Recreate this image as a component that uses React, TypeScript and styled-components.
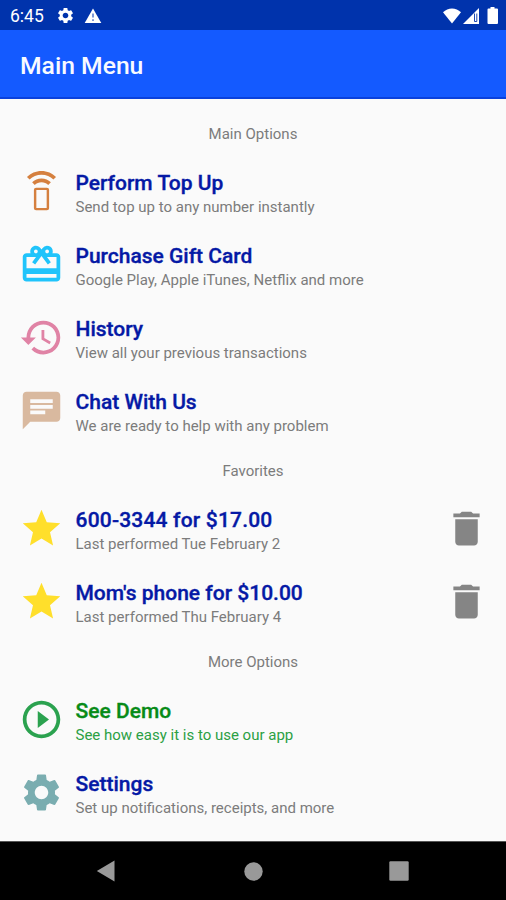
import React from "react";
import styled, { createGlobalStyle } from "styled-components";
import {
  MdRedeem,
  MdHistory,
  MdChat,
  MdStar,
  MdDelete,
  MdPlayCircleOutline,
  MdSettings,
} from "react-icons/md";

const GlobalStyle = createGlobalStyle`
  * { box-sizing: border-box; }
  body { margin: 0; font-family: Roboto, "Liberation Sans", sans-serif; }
`;

const Screen = styled.div`
  width: 506px;
  height: 900px;
  display: flex;
  flex-direction: column;
  background: #fafafa;
  overflow: hidden;
`;

const StatusBar = styled.header`
  height: 30px;
  flex: none;
  display: flex;
  align-items: center;
  justify-content: space-between;
  padding: 1px 7px 0 10px;
  background: #0033ac;
  color: #fff;
`;

const StatusGroup = styled.div<{ $gap: number }>`
  display: flex;
  align-items: center;
  gap: ${(p) => p.$gap}px;

  svg {
    display: block;
  }
`;

const Clock = styled.span`
  width: 37px;
  font-size: 17.5px;
  line-height: 20px;
`;

const AppBar = styled.div`
  height: 69px;
  flex: none;
  display: flex;
  align-items: center;
  padding: 5px 20px 0;
  background: #145aff;
  border-bottom: 2px solid #0a41dc;
`;

const AppTitle = styled.h1`
  margin: 0;
  font-size: 24.7px;
  line-height: 30px;
  font-weight: 500;
  color: #f8faff;
`;

const Content = styled.main`
  flex: 1;
  padding-top: 11.4px;
`;

const SectionLabel = styled.h2<{ $height: number }>`
  margin: 0;
  height: ${(p) => p.$height}px;
  padding-top: 3px;
  display: flex;
  align-items: center;
  justify-content: center;
  font-size: 15px;
  font-weight: 400;
  color: #7c7c7c;
`;

const Row = styled.div`
  height: 73.2px;
  display: flex;
  align-items: center;
  padding: 0 17.5px 0 18.5px;
`;

const RowIcon = styled.span<{ $color: string }>`
  width: 45px;
  height: 45px;
  flex: none;
  display: flex;
  color: ${(p) => p.$color};
`;

const RowText = styled.div`
  flex: 1;
  padding: 5px 0 0 12px;
`;

const RowTitle = styled.div<{ $color: string; $spacing: number }>`
  font-size: 21px;
  line-height: 26px;
  font-weight: 500;
  letter-spacing: ${(p) => p.$spacing}px;
  color: ${(p) => p.$color};
  -webkit-text-stroke: 0.35px currentColor;
`;

const RowDetail = styled.div<{ $color: string }>`
  font-size: 15px;
  line-height: 22px;
  color: ${(p) => p.$color};
`;

const DeleteButton = styled.button`
  width: 45px;
  height: 45px;
  padding: 0;
  border: 0;
  background: none;
  color: #858585;
  display: flex;
`;

const NavBar = styled.nav`
  height: 59px;
  flex: none;
  display: flex;
  align-items: center;
  justify-content: space-between;
  padding: 0 97px 0 96px;
  background: #000;
  border-top: 1px solid #555;
`;

function TopUpIcon({ size }: { size: number }) {
  return (
    <svg width={size} height={size} viewBox="0 0 24 24" fill="none">
      <path
        fill="currentColor"
        d="M7 7.07 8.43 8.5c.91-.91 2.18-1.48 3.57-1.48s2.66.57 3.57 1.48L17 7.07C15.720 5.790 13.950 5 12 5s-3.720.790-5 2.070zM12 1C8.980 1 6.240 2.230 4.250 4.210l1.410 1.410C7.280 4 9.530 3 12 3s4.720 1 6.340 2.620l1.410-1.410C17.760 2.230 15.020 1 12 1z"
      />
      <rect x="8.600" y="10.600" width="6.800" height="10.800" rx="0.500" stroke="currentColor" strokeWidth="1.300" />
    </svg>
  );
}

type Item = {
  icon: React.ComponentType<{ size: number }>;
  iconColor: string;
  title: string;
  detail: string;
  titleColor?: string;
  titleSpacing?: number;
  detailColor?: string;
  removable?: boolean;
};

const sections: { label: string; labelHeight: number; items: Item[] }[] = [
  {
    label: "Main Options",
    labelHeight: 44.3,
    items: [
      { icon: TopUpIcon, iconColor: "#d5803f", title: "Perform Top Up", detail: "Send top up to any number instantly" },
      { icon: MdRedeem, iconColor: "#20c4fb", title: "Purchase Gift Card", detail: "Google Play, Apple iTunes, Netflix and more" },
      { icon: MdHistory, iconColor: "#e083a5", title: "History", detail: "View all your previous transactions" },
      { icon: MdChat, iconColor: "#d9b99f", title: "Chat With Us", detail: "We are ready to help with any problem" },
    ],
  },
  {
    label: "Favorites",
    labelHeight: 44.1,
    items: [
      {
        icon: MdStar,
        iconColor: "#ffdf2b",
        title: "600-3344 for $17.00",
        titleSpacing: 0.19,
        detail: "Last performed Tue February 2",
        removable: true,
      },
      { icon: MdStar, iconColor: "#ffdf2b", title: "Mom's phone for $10.00", detail: "Last performed Thu February 4", removable: true },
    ],
  },
  {
    label: "More Options",
    labelHeight: 45,
    items: [
      {
        icon: MdPlayCircleOutline,
        iconColor: "#2ba24f",
        title: "See Demo",
        detail: "See how easy it is to use our app",
        titleColor: "#078b17",
        detailColor: "#2ba044",
      },
      { icon: MdSettings, iconColor: "#7aadb0", title: "Settings", detail: "Set up notifications, receipts, and more" },
    ],
  },
];

function MenuRow({ item }: { item: Item }) {
  const Icon = item.icon;
  return (
    <Row>
      <RowIcon $color={item.iconColor}>
        <Icon size={45} />
      </RowIcon>
      <RowText>
        <RowTitle $color={item.titleColor ?? "#0519a5"} $spacing={item.titleSpacing ?? 0}>
          {item.title}
        </RowTitle>
        <RowDetail $color={item.detailColor ?? "#7c7c7c"}>{item.detail}</RowDetail>
      </RowText>
      {item.removable && (
        <DeleteButton aria-label="Delete favorite">
          <MdDelete size={45} />
        </DeleteButton>
      )}
    </Row>
  );
}

export default function App() {
  return (
    <>
      <GlobalStyle />
      <Screen>
        <StatusBar>
          <StatusGroup $gap={9}>
            <Clock>6:45</Clock>
            <MdSettings size={19} />
            <svg width="18" height="16" viewBox="0 0 18 16">
              <path d="M9 0.5 17.3 15H0.7Z" fill="#fff" />
              <path d="M9 5.5v4M9 11.2v1.8" stroke="#5f7fcb" strokeWidth="1.6" />
            </svg>
          </StatusGroup>
          <StatusGroup $gap={2}>
            <svg width="18" height="16" viewBox="0 0 18 16">
              <path d="M0 4.2C5-.9 13-.9 18 4.2L9 15.5Z" fill="#fff" />
            </svg>
            <svg width="16" height="16" viewBox="0 0 16 16">
              <path d="M0 16 16 0V16Z" fill="#fff" />
              <path d="M11.500 5.500v8h2.300v-8" fill="none" stroke="#1d49b3" strokeWidth="1" />
            </svg>
            <svg width="18" height="17" viewBox="0 0 18 17">
              <path d="M9.5 0h4v1.5H16a1 1 0 0 1 1 1V16a1 1 0 0 1-1 1H7.500a1 1 0 0 1-1-1V2.500a1 1 0 0 1 1-1h2Z" fill="#fff" />
            </svg>
          </StatusGroup>
        </StatusBar>
        <AppBar>
          <AppTitle>Main Menu</AppTitle>
        </AppBar>
        <Content>
          {sections.map((section) => (
            <section key={section.label}>
              <SectionLabel $height={section.labelHeight}>{section.label}</SectionLabel>
              {section.items.map((item) => (
                <MenuRow key={item.title} item={item} />
              ))}
            </section>
          ))}
        </Content>
        <NavBar>
          <svg width="19" height="22" viewBox="0 0 19 22">
            <path d="M18.500.5v21L.8 11Z" fill="#999" />
          </svg>
          <svg width="21" height="19" viewBox="0 0 21 19">
            <circle cx="11.500" cy="9.500" r="9.200" fill="#999" />
          </svg>
          <svg width="20" height="20" viewBox="0 0 20 20">
            <rect x="0.300" y="0.300" width="19.400" height="19.400" rx="1.200" fill="#999" />
          </svg>
        </NavBar>
      </Screen>
    </>
  );
}
